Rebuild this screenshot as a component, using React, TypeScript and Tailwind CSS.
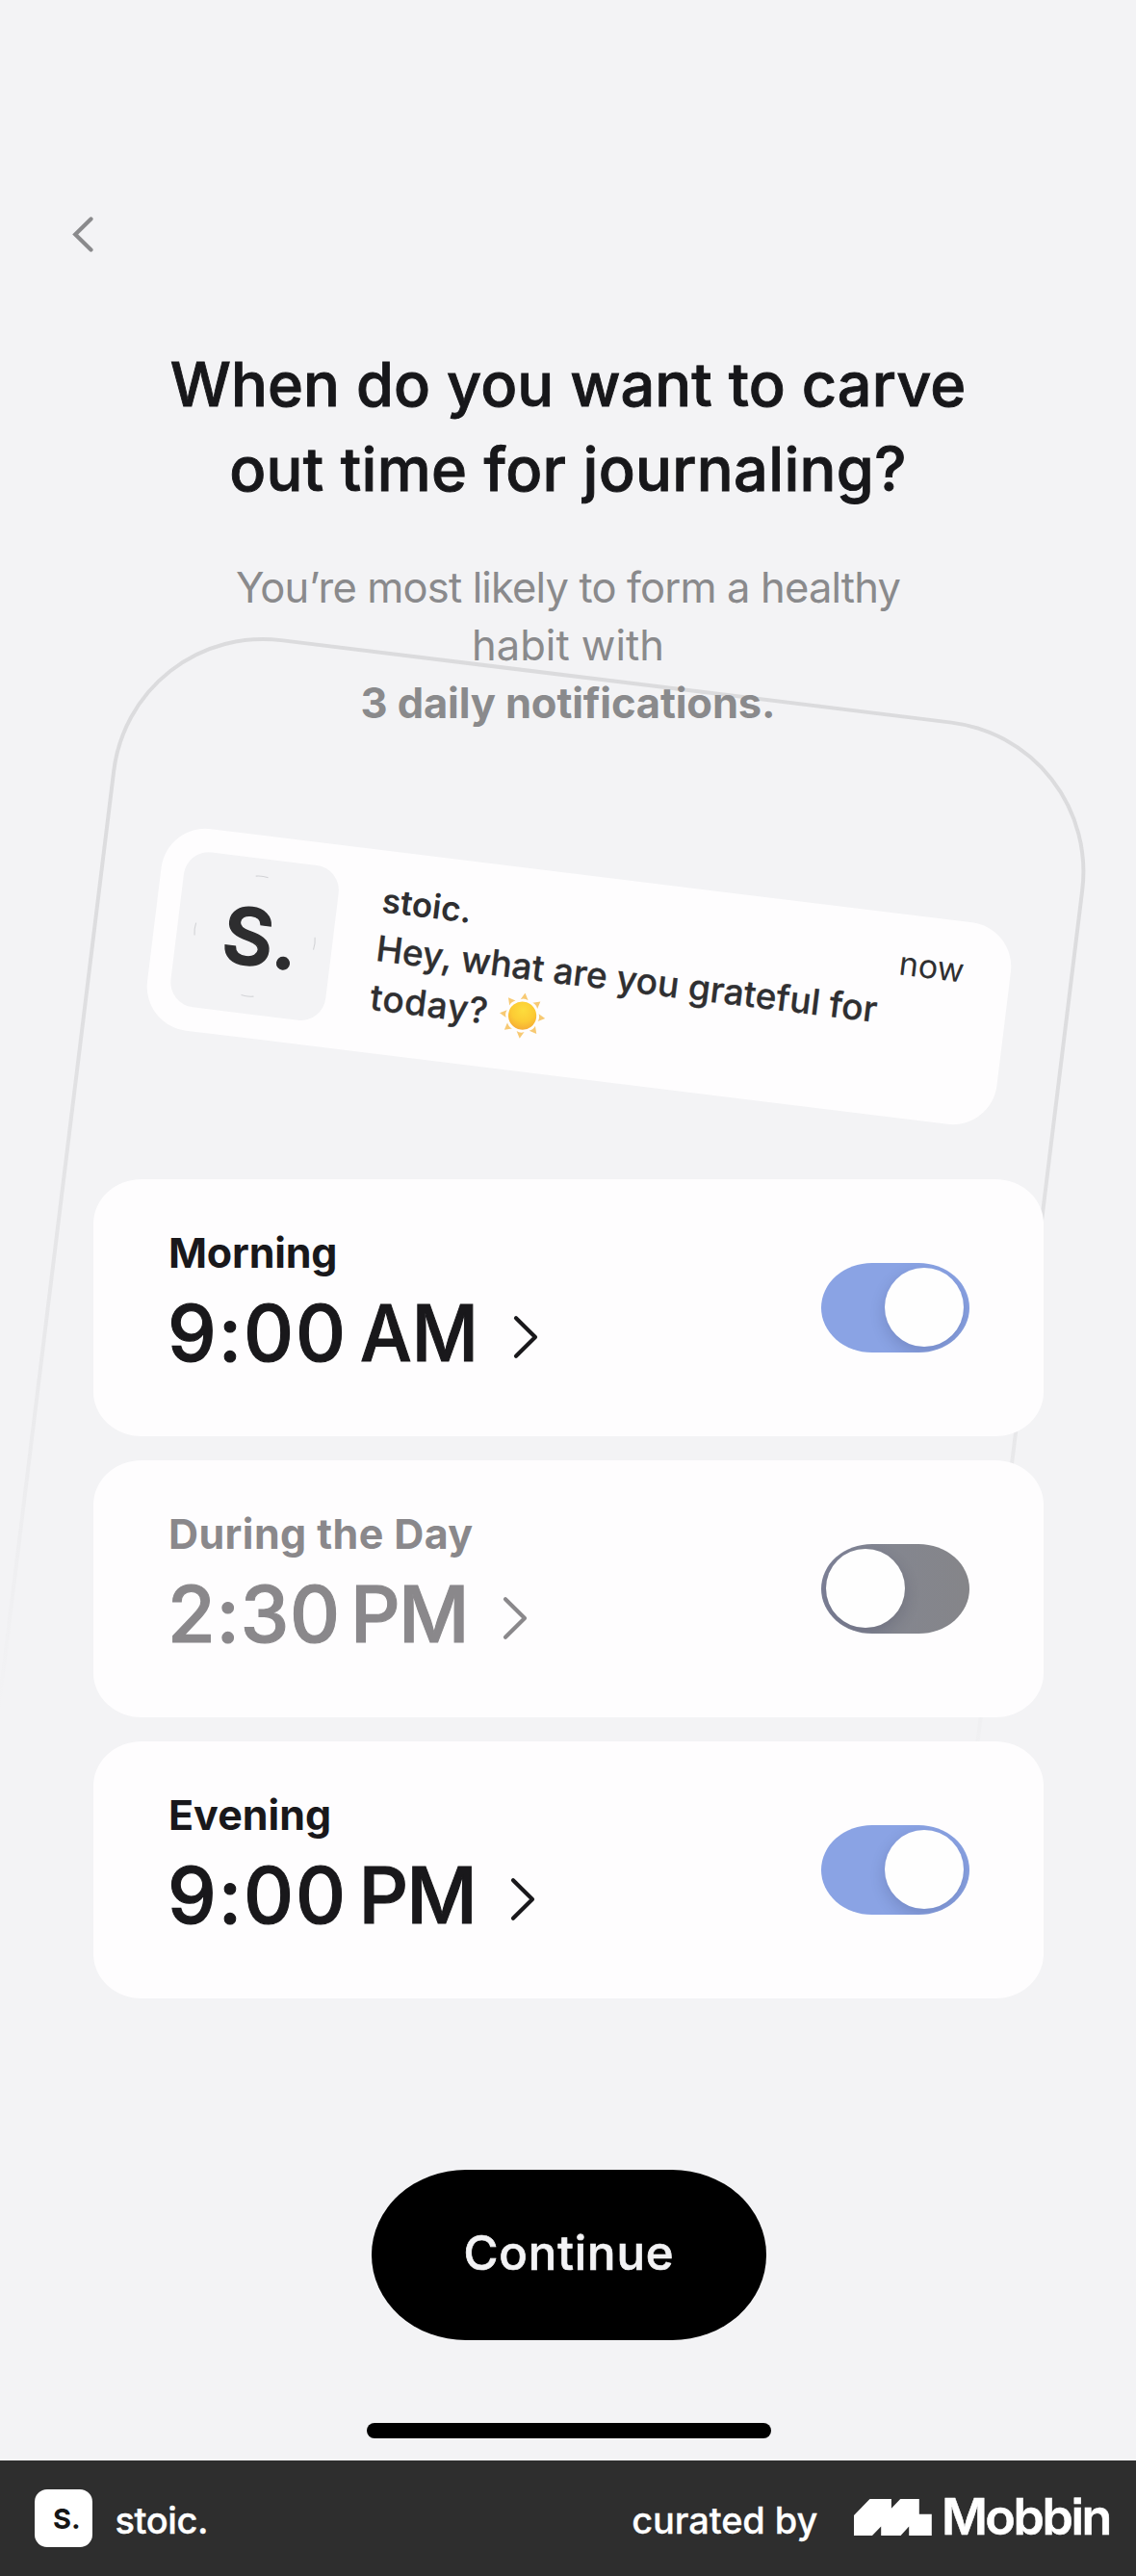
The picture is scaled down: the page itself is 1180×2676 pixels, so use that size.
type Reminder = {
  label: string;
  digits: string;
  meridiem: string;
  on: boolean;
  labelClass: string;
  digitsClass: string;
  meridiemClass: string;
  meridiemInner: string;
};

const reminders: Reminder[] = [
  {
    label: 'Morning',
    digits: '9:00',
    meridiem: 'AM',
    on: true,
    labelClass: 'tracking-[-0.2px]',
    digitsClass: 'w-[200.4px] tracking-[1.9px]',
    meridiemClass: 'w-[157.6px]',
    meridiemInner: 'inline-block origin-left scale-x-[0.94]',
  },
  {
    label: 'During the Day',
    digits: '2:30',
    meridiem: 'PM',
    on: false,
    labelClass: 'tracking-[0.4px]',
    digitsClass: 'w-[190px] tracking-[0.8px]',
    meridiemClass: 'w-[157px]',
    meridiemInner: 'inline-block tracking-[-1.8px]',
  },
  {
    label: 'Evening',
    digits: '9:00',
    meridiem: 'PM',
    on: true,
    labelClass: 'tracking-normal',
    digitsClass: 'w-[198.4px] tracking-[1.9px]',
    meridiemClass: 'w-[156.6px]',
    meridiemInner: 'inline-block tracking-[-1.8px]',
  },
];

/* Tilted phone outline that fades out towards the bottom. */
function PhoneOutline() {
  return (
    <svg className="pointer-events-none absolute inset-0 h-full w-full" viewBox="0 0 1180 2556" fill="none" aria-hidden="true">
      <defs>
        <linearGradient id="outline-fade" gradientUnits="userSpaceOnUse" x1="0" y1="0" x2="0" y2="1140">
          <stop offset="0" stopColor="#dbdbdd" />
          <stop offset="0.3" stopColor="#dddddf" />
          <stop offset="1" stopColor="#dddddf" stopOpacity="0" />
        </linearGradient>
      </defs>
      <path
        transform="translate(137.2 646.1) rotate(7)"
        d="M0 1140V156A156 156 0 0 1 156 0H857.6A156 156 0 0 1 1013.6 156V1140"
        stroke="url(#outline-fade)"
        strokeWidth="4"
      />
    </svg>
  );
}

function Sun() {
  return (
    <svg className="ml-[12px] h-[48px] w-[48px]" viewBox="-24 -24 48 48" aria-label="sun">
      <defs>
        <radialGradient id="sun-disc" cx="0.5" cy="0.3" r="0.75">
          <stop offset="0" stopColor="#fddc3c" />
          <stop offset="0.55" stopColor="#fccb34" />
          <stop offset="1" stopColor="#f4a735" />
        </radialGradient>
      </defs>
      {[0, 45, 90, 135, 180, 225, 270, 315].map((a) => (
        <path key={a} transform={`rotate(${a})`} d="M-4 -16.6Q0 -18.6 4 -16.6L0 -23.8Z" fill="#f7c973" />
      ))}
      <circle r="14.6" fill="url(#sun-disc)" />
    </svg>
  );
}

function NotificationTile() {
  return (
    <div className="relative mt-[24px] ml-[24px] h-[162px] w-[162px] shrink-0 rounded-[26px] bg-[#f3f3f5]">
      <svg className="absolute inset-0 h-full w-full" viewBox="-81 -81 162 162" fill="none" aria-hidden="true">
        {[0, 90, 180, 270].map((a) => (
          <path key={a} transform={`rotate(${a})`} d="M-6.5 -62.2Q0 -63.6 6.5 -62.2" stroke="#d2d3d6" strokeWidth="1.1" />
        ))}
      </svg>
      <div className="relative ml-[48px] h-[162px] text-[81px] leading-[165px] font-semibold whitespace-nowrap text-[#2d2d2f] [-webkit-text-stroke:1.4px_#2d2d2f]">
        S.
      </div>
    </div>
  );
}

function Notification() {
  return (
    <div className="relative mt-[149.3px] ml-[157px] flex h-[211px] w-[889px] rotate-[7deg] rounded-[46px] bg-[#fefdfe] text-[#2f2f31]">
      <NotificationTile />
      <div className="ml-[46px] w-[541px] shrink-0 pt-[31.2px] whitespace-nowrap">
        <div className="text-[35px] leading-[40px] font-semibold">stoic.</div>
        <div className="mt-[4.5px] text-[37px] leading-[51.7px] font-medium [-webkit-text-stroke:0.3px_#2f2f31]">
          Hey, what are you grateful for
          <div className="flex items-center tracking-[0.8px]">
            today?
            <Sun />
          </div>
        </div>
      </div>
      <div className="pt-[31.2px] text-[34px] leading-[40px]">now</div>
    </div>
  );
}

function Toggle({ on }: { on: boolean }) {
  return (
    <div
      className={
        'flex h-[93.4px] w-[154px] items-center overflow-hidden rounded-[53px/46.7px] ' +
        (on ? 'justify-end bg-[#8aa3e4] pr-[6px]' : 'justify-start bg-linear-to-r from-[#80849a] via-[#84868f] to-[#858589] pl-[4.5px]')
      }
    >
      <div className="h-[82px] w-[82px] rounded-full bg-[#fefefe] shadow-[0_6px_16px_rgba(20,20,50,0.17)]" />
    </div>
  );
}

function ReminderCard({ r }: { r: Reminder }) {
  return (
    <div className="flex h-[267.5px] items-center justify-between rounded-[50px/46px] bg-[#fefdfe] px-[77px]">
      <div className={'h-full pt-[50px] whitespace-nowrap ' + (r.on ? 'text-[#19181b]' : 'text-[#8a888b]')}>
        <div className={'ml-px text-[43px] leading-[52px] font-bold ' + r.labelClass}>{r.label}</div>
        <div className="mt-[14.3px] flex items-center text-[80.6px] leading-[88px] font-medium [-webkit-text-stroke:1.1px_currentColor]">
          <span className={r.digitsClass}>{r.digits}</span>
          <span className={r.meridiemClass}>
            <span className={r.meridiemInner}>{r.meridiem}</span>
          </span>
          <svg className="mt-[8px] h-[46px] w-[28px]" viewBox="0 0 28 46" fill="none" aria-hidden="true">
            <path d="M4 3.2L24 23L4 42.8" stroke="currentColor" strokeWidth="4.2" strokeLinecap="round" strokeLinejoin="round" />
          </svg>
        </div>
      </div>
      <Toggle on={r.on} />
    </div>
  );
}

function Footer() {
  return (
    <footer className="flex h-[120px] items-center bg-[#2e2e2e] pl-[36px] whitespace-nowrap text-white">
      <div className="h-[60px] w-[60px] rounded-[13px] bg-white pl-[19px] text-[29px] leading-[61px] font-bold text-[#151515]">
        S.
      </div>
      <div className="mt-[4px] ml-[23.5px] w-[536.7px] text-[38px] font-medium tracking-[-0.4px] [-webkit-text-stroke:0.4px_#fff]">stoic.</div>
      <div className="mt-[4px] w-[230.7px] text-[38px] font-medium tracking-[-0.1px] [-webkit-text-stroke:0.3px_#fff]">curated by</div>
      <svg className="-mt-[2px] h-[38px] w-[81px]" viewBox="0 0 81 38" fill="#fff" aria-hidden="true">
        <path d="M0 17L16.5 0H38.9V9.7L48.2 0H67.8V15.7H80.8V38H57.2V28.6L48.6 38H28.2V28.6L19 38H0Z" />
      </svg>
      <div className="-mt-[2px] ml-[10px] text-[52px] font-semibold tracking-[-2.5px] [-webkit-text-stroke:0.5px_#fff] [font-feature-settings:'ss07']">Mobbin</div>
    </footer>
  );
}

export default function App() {
  return (
    <div className="w-[1180px] overflow-hidden bg-[#f3f3f5] font-['Inter',sans-serif]">
      <main className="relative h-[2556px] overflow-hidden pt-[224px]">
        <PhoneOutline />
        <svg className="relative ml-[73px] h-[39px] w-[27px]" viewBox="0 0 27 39" fill="none" aria-hidden="true">
          <path d="M21.5 3.5L5.2 19.5L21.5 35.5" stroke="#8a8a8c" strokeWidth="4.2" strokeLinecap="round" strokeLinejoin="miter" />
        </svg>
        <h1 className="relative mt-[92px] text-center text-[63px] leading-[88px] font-medium text-[#17171a] [-webkit-text-stroke:0.9px_#17171a]">
          <span className="block tracking-[0.1px]">When do you want to carve</span>
          <span className="block tracking-[0.35px]">out time for journaling?</span>
        </h1>
        <p className="relative mt-[49px] text-center text-[43.5px] leading-[60px] text-[#8a8a8c]">
          <span className="block tracking-[-0.85px]">You’re most likely to form a healthy</span>
          <span className="block">habit with</span>
          <span className="block font-bold tracking-[-0.15px]">3 daily notifications.</span>
        </p>
        <Notification />
        <div className="relative mt-[104.4px] ml-[97px] flex w-[987px] flex-col gap-[24.5px]">
          {reminders.map((r) => (
            <ReminderCard key={r.label} r={r} />
          ))}
        </div>
        <button className="relative mt-[178px] ml-[386px] block h-[176.5px] w-[410px] rounded-[98px/88.2px] bg-black pb-[3px] text-[49px] font-medium tracking-[0.9px] text-[#f3f3f5] [-webkit-text-stroke:0.7px_#f3f3f5]">
          Continue
        </button>
        <div className="mt-[86.3px] ml-[381px] h-[15.6px] w-[420px] rounded-full bg-black" />
      </main>
      <Footer />
    </div>
  );
}
